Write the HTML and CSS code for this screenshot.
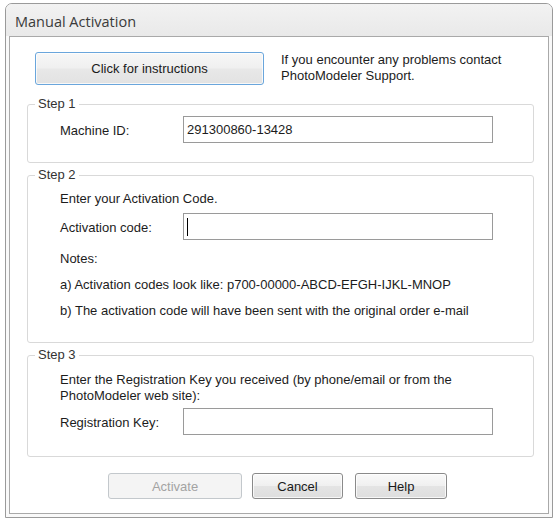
FILE: index.html
```html
<!DOCTYPE html>
<html>
<head>
<meta charset="utf-8">
<title>Manual Activation</title>
<link rel="stylesheet" href="styles.css">
</head>
<body>
<div class="window">
  <div class="titlebar">Manual Activation</div>
  <div class="client">
    <div class="top-row">
      <button class="btn btn-instructions">Click for instructions</button>
      <div class="support">If you encounter any problems contact<br>PhotoModeler Support.</div>
    </div>

    <fieldset class="group group-1">
      <legend>Step 1</legend>
      <div class="group-body body-1">
        <div class="row">
          <span class="label">Machine ID:</span>
          <div class="field">291300860-13428</div>
        </div>
      </div>
    </fieldset>

    <fieldset class="group group-2">
      <legend>Step 2</legend>
      <div class="group-body body-2">
        <div class="line">Enter your Activation Code.</div>
        <div class="row row-code">
          <span class="label">Activation code:</span>
          <div class="field"><span class="caret"></span></div>
        </div>
        <div class="notes">
          <div>Notes:</div>
          <div>a) Activation codes look like: p700-00000-ABCD-EFGH-IJKL-MNOP</div>
          <div>b) The activation code will have been sent with the original order e-mail</div>
        </div>
      </div>
    </fieldset>

    <fieldset class="group group-3">
      <legend>Step 3</legend>
      <div class="group-body body-3">
        <div class="line">Enter the Registration Key you received (by phone/email or from the<br>PhotoModeler web site):</div>
        <div class="row row-key">
          <span class="label">Registration Key:</span>
          <div class="field"></div>
        </div>
      </div>
    </fieldset>

    <div class="actions">
      <button class="btn btn-activate" disabled>Activate</button>
      <button class="btn btn-cancel">Cancel</button>
      <button class="btn btn-help">Help</button>
    </div>
  </div>
</div>
</body>
</html>
```

FILE: styles.css
```css
* { box-sizing: border-box; }

body {
  margin: 0;
  background: #ffffff;
  font-family: "Liberation Sans", Arial, sans-serif;
  font-size: 13px;
  color: #1c1c1c;
}

.window {
  margin: 3px 0 0 5px;
  width: 548px;
  height: 515px;
  border: 1px solid #9a9a9a;
  border-radius: 7px 7px 0 0;
  background: #f9f9f9;
  padding: 0 3px 3px 3px;
  display: flex;
  flex-direction: column;
}

.titlebar {
  height: 32px;
  flex: none;
  padding: 3px 0 0 9px;
  display: flex;
  align-items: center;
  font-family: "Open Sans", "Liberation Sans", sans-serif;
  font-size: 14.5px;
  color: #3a3a3a;
  background: linear-gradient(#f2f2f2, #e9e9e9);
  margin: 0 -3px;
  border-radius: 6px 6px 0 0;
}

.client {
  flex: 1;
  background: #ffffff;
  border: 1px solid #a9a9a9;
  display: flex;
  flex-direction: column;
}

.top-row {
  display: flex;
  align-items: flex-start;
  margin-top: 15px;
  padding-left: 25px;
}

.btn {
  font-family: "Liberation Sans", Arial, sans-serif;
  font-size: 13px;
  color: #1a1a1a;
  border: 1px solid #8a8a8a;
  border-radius: 3px;
  background: linear-gradient(#f9f9f9 0%, #f0f0f0 48%, #e4e4e4 52%, #dedede 100%);
  box-shadow: inset 0 0 0 1px rgba(255,255,255,0.75);
  padding: 0;
  height: 26px;
}

.btn-instructions {
  width: 229px;
  height: 33px;
  border-color: #6aa6dc;
  background: linear-gradient(#f7f7f7 0%, #f0f0f0 48%, #e8e8e8 52%, #e2e2e2 100%);
}

.support {
  margin-left: 17px;
  line-height: 16px;
}

.group {
  margin: 0 14px 0 17px;
  padding: 0;
  border: 1px solid #d9d9d9;
  border-radius: 3px;
  min-width: 0;
}

.group legend {
  margin-left: 7px;
  padding: 0 3px;
  line-height: 16px;
  color: #333333;
}

.group-1 { margin-top: 11px; }
.group-2 { margin-top: 4px; }
.group-3 { margin-top: 4px; }

.group-body { padding-left: 32px; }
.body-1 { padding-top: 4px; padding-bottom: 19px; }
.body-2 { padding-top: 8px; padding-bottom: 18px; }
.body-3 { padding-top: 9px; padding-bottom: 21px; }

.line { line-height: 16px; }

.row {
  display: flex;
  align-items: center;
}

.row-code { margin-top: 6px; }
.row-key { margin-top: 4px; }

.label {
  width: 123px;
  flex: none;
  padding-top: 2px;
}

.field {
  width: 310px;
  height: 27px;
  border: 1px solid #9a9a9a;
  background: #ffffff;
  padding-left: 3px;
  display: flex;
  align-items: center;
}

.caret {
  width: 1px;
  height: 18px;
  background: #000000;
}

.notes {
  margin-top: 6px;
  line-height: 26px;
}

.actions {
  display: flex;
  margin-top: 16px;
  padding-left: 98px;
}

.btn-activate {
  width: 134px;
  color: #a3a3a3;
  border-color: #c3c8cc;
  background: #f4f4f4;
  box-shadow: none;
}

.btn-cancel {
  width: 91px;
  margin-left: 10px;
}

.btn-help {
  width: 92px;
  margin-left: 12px;
}
```
